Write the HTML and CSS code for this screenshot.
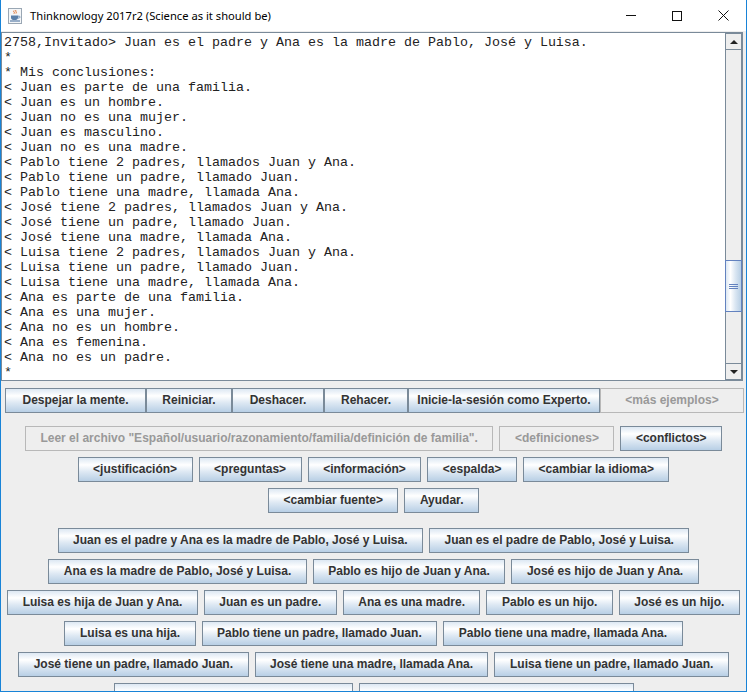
FILE: index.html
```html
<!DOCTYPE html>
<html lang="es">
<head>
<meta charset="utf-8">
<title>Thinknowlogy 2017r2</title>
<link rel="stylesheet" href="styles.css">
</head>
<body>
<div class="window">
  <div class="titlebar">
    <svg class="appicon" width="16" height="16" viewBox="0 0 16 16">
      <rect x="1.5" y="0.5" width="13" height="15" fill="#f4f6f8" stroke="#9aa7b4"/>
      <path d="M7 2.5c-1.5 1 1.5 1.8 0 3.2M9 2c-1.3 1.2 1.2 2 0 3.5" fill="none" stroke="#e0702a" stroke-width="1"/>
      <path d="M4 7.5h7v2.2c0 1.5-1.3 2.3-3.5 2.3S4 11.2 4 9.7z" fill="#5a7fa8"/>
      <path d="M11 8.2h1.3c.9 0 .9 1.8-.3 1.8H11" fill="none" stroke="#5a7fa8" stroke-width="0.9"/>
      <path d="M3 13h10" stroke="#5a7fa8" stroke-width="1.2"/>
    </svg>
    <span class="title">Thinknowlogy 2017r2 (Science as it should be)</span>
    <div class="controls">
      <div class="ctl"><span class="ctl-min"></span></div>
      <div class="ctl"><span class="ctl-max"></span></div>
      <div class="ctl">
        <svg width="11" height="11" viewBox="0 0 11 11"><path d="M0.5 0.5L10.5 10.5M10.5 0.5L0.5 10.5" stroke="#111" stroke-width="1"/></svg>
      </div>
    </div>
  </div>
  <div class="client">
    <div class="scrollpane">
      <pre class="textview">2758,Invitado&gt; Juan es el padre y Ana es la madre de Pablo, José y Luisa.
*
* Mis conclusiones:
&lt; Juan es parte de una familia.
&lt; Juan es un hombre.
&lt; Juan no es una mujer.
&lt; Juan es masculino.
&lt; Juan no es una madre.
&lt; Pablo tiene 2 padres, llamados Juan y Ana.
&lt; Pablo tiene un padre, llamado Juan.
&lt; Pablo tiene una madre, llamada Ana.
&lt; José tiene 2 padres, llamados Juan y Ana.
&lt; José tiene un padre, llamado Juan.
&lt; José tiene una madre, llamada Ana.
&lt; Luisa tiene 2 padres, llamados Juan y Ana.
&lt; Luisa tiene un padre, llamado Juan.
&lt; Luisa tiene una madre, llamada Ana.
&lt; Ana es parte de una familia.
&lt; Ana es una mujer.
&lt; Ana no es un hombre.
&lt; Ana es femenina.
&lt; Ana no es un padre.
*</pre>
      <div class="vscroll">
        <div class="sb-btn"><span class="tri-up"></span></div>
        <div class="track">
          <div class="thumb" style="margin-top:210px"><span class="grip"></span></div>
        </div>
        <div class="sb-btn"><span class="tri-down"></span></div>
      </div>
    </div>

    <div class="toolbar">
      <button class="btn">Despejar la mente.</button>
      <button class="btn">Reiniciar.</button>
      <button class="btn">Deshacer.</button>
      <button class="btn">Rehacer.</button>
      <button class="btn">Inicie-la-sesión como Experto.</button>
      <button class="btn" disabled>&lt;más ejemplos&gt;</button>
    </div>

    <div class="panel panel-cmds">
      <div class="row">
        <button class="btn" disabled>Leer el archivo "Español/usuario/razonamiento/familia/definición de familia".</button>
        <button class="btn" disabled>&lt;definiciones&gt;</button>
        <button class="btn">&lt;conflictos&gt;</button>
      </div>
      <div class="row">
        <button class="btn">&lt;justificación&gt;</button>
        <button class="btn">&lt;preguntas&gt;</button>
        <button class="btn">&lt;información&gt;</button>
        <button class="btn">&lt;espalda&gt;</button>
        <button class="btn">&lt;cambiar la idioma&gt;</button>
      </div>
      <div class="row">
        <button class="btn">&lt;cambiar fuente&gt;</button>
        <button class="btn">Ayudar.</button>
      </div>
    </div>

    <div class="panel panel-sentences">
      <div class="row">
        <button class="btn">Juan es el padre y Ana es la madre de Pablo, José y Luisa.</button>
        <button class="btn">Juan es el padre de Pablo, José y Luisa.</button>
      </div>
      <div class="row">
        <button class="btn">Ana es la madre de Pablo, José y Luisa.</button>
        <button class="btn">Pablo es hijo de Juan y Ana.</button>
        <button class="btn">José es hijo de Juan y Ana.</button>
      </div>
      <div class="row">
        <button class="btn">Luisa es hija de Juan y Ana.</button>
        <button class="btn">Juan es un padre.</button>
        <button class="btn">Ana es una madre.</button>
        <button class="btn">Pablo es un hijo.</button>
        <button class="btn">José es un hijo.</button>
      </div>
      <div class="row">
        <button class="btn">Luisa es una hija.</button>
        <button class="btn">Pablo tiene un padre, llamado Juan.</button>
        <button class="btn">Pablo tiene una madre, llamada Ana.</button>
      </div>
      <div class="row">
        <button class="btn">José tiene un padre, llamado Juan.</button>
        <button class="btn">José tiene una madre, llamada Ana.</button>
        <button class="btn">Luisa tiene un padre, llamado Juan.</button>
      </div>
      <div class="row">
        <button class="btn btn-cut w239" aria-label="Luisa tiene una madre, llamada Ana."></button>
        <button class="btn btn-cut w275" aria-label="Juan y Ana son los padres de Pablo, José y Luisa."></button>
      </div>
    </div>
  </div>
</div>
</body>
</html>
```

FILE: styles.css
```css
* { box-sizing: border-box; }
html, body { margin: 0; padding: 0; }
body {
  width: 747px;
  height: 692px;
  overflow: hidden;
  background: #ffffff;
}
.window {
  width: 747px;
  height: 692px;
  display: flex;
  flex-direction: column;
  border-left: 1px solid #1883d7;
  border-right: 1px solid #1883d7;
  border-bottom: 1px solid #1883d7;
  overflow: hidden;
}
.titlebar {
  height: 31px;
  flex: none;
  background: #ffffff;
  display: flex;
  align-items: center;
}
.appicon { margin-left: 6px; margin-right: 7px; flex: none; }
.title {
  font-family: "Noto Sans", "Open Sans", sans-serif;
  font-size: 11.2px;
  color: #000;
  white-space: nowrap;
}
.controls { margin-left: auto; display: flex; height: 31px; }
.ctl {
  width: 46px;
  height: 31px;
  display: flex;
  align-items: center;
  justify-content: center;
}
.ctl-min { width: 10px; height: 1px; background: #111; }
.ctl-max { width: 10px; height: 10px; border: 1px solid #111; }

.client {
  flex: 1;
  background: #eeeeee;
  display: flex;
  flex-direction: column;
  padding-top: 1px;
  min-height: 0;
}
.scrollpane {
  height: 349px;
  flex: none;
  margin-right: 3px;
  border: 1px solid #7a8a99;
  background: #ffffff;
  display: flex;
}
.textview {
  flex: 1;
  margin: 0;
  padding: 2px 0 0 2px;
  font-family: "Liberation Mono", "Courier New", monospace;
  font-size: 13.333px;
  line-height: 15px;
  color: #222;
  overflow: hidden;
}
.vscroll {
  width: 17px;
  flex: none;
  display: flex;
  flex-direction: column;
  background: #eeeeee;
}
.sb-btn {
  height: 17px;
  flex: none;
  border: 1px solid #7a8a99;
  background: #eeeeee;
  display: flex;
  align-items: center;
  justify-content: center;
}
.tri-up {
  width: 0; height: 0;
  border-left: 4px solid transparent;
  border-right: 4px solid transparent;
  border-bottom: 4px solid #222;
}
.tri-down {
  width: 0; height: 0;
  border-left: 4px solid transparent;
  border-right: 4px solid transparent;
  border-top: 4px solid #222;
}
.track {
  flex: 1;
  border-left: 1px solid #7a8a99;
  border-right: 1px solid #7a8a99;
  display: flex;
  flex-direction: column;
}
.thumb {
  height: 52px;
  margin-left: -1px;
  margin-right: -1px;
  border: 1px solid #6382bf;
  background: linear-gradient(to right, #dde8f3 0%, #ffffff 30%, #dde8f3 60%, #b8cfe5 100%);
  display: flex;
  align-items: center;
  justify-content: center;
}
.grip {
  width: 9px;
  height: 5px;
  border-top: 1px solid #6382bf;
  border-bottom: 1px solid #6382bf;
  background: linear-gradient(#6382bf, #6382bf) center / 100% 1px no-repeat;
}

.btn {
  height: 25px;
  margin: 0;
  padding: 0 14.5px;
  border: 1px solid #7a8a99;
  border-radius: 0;
  font-family: "Liberation Sans", Arial, sans-serif;
  font-weight: bold;
  font-size: 12px;
  line-height: 23px;
  color: #333333;
  white-space: nowrap;
  background: linear-gradient(to bottom, #dde8f3 0%, #ffffff 30%, #dde8f3 60%, #b8cfe5 100%);
  flex: none;
}
.btn:disabled {
  background: #eeeeee;
  border-color: #b8b8b8;
  color: #999999;
}
.w239 { width: 239px; }
.w275 { width: 275px; }

.toolbar {
  margin: 7px 2px 0 4px;
  display: grid;
  grid-template-columns: 141px 86px 92px 84px 192px 1fr;
  height: 25px;
  flex: none;
}
.toolbar .btn { padding: 0; }

.panel {
  display: flex;
  flex-direction: column;
  gap: 6px;
  flex: none;
}
.panel-cmds { margin-top: 13px; }
.panel-sentences { margin-top: 15px; }
.row {
  display: flex;
  justify-content: center;
  gap: 6px;
}
```
